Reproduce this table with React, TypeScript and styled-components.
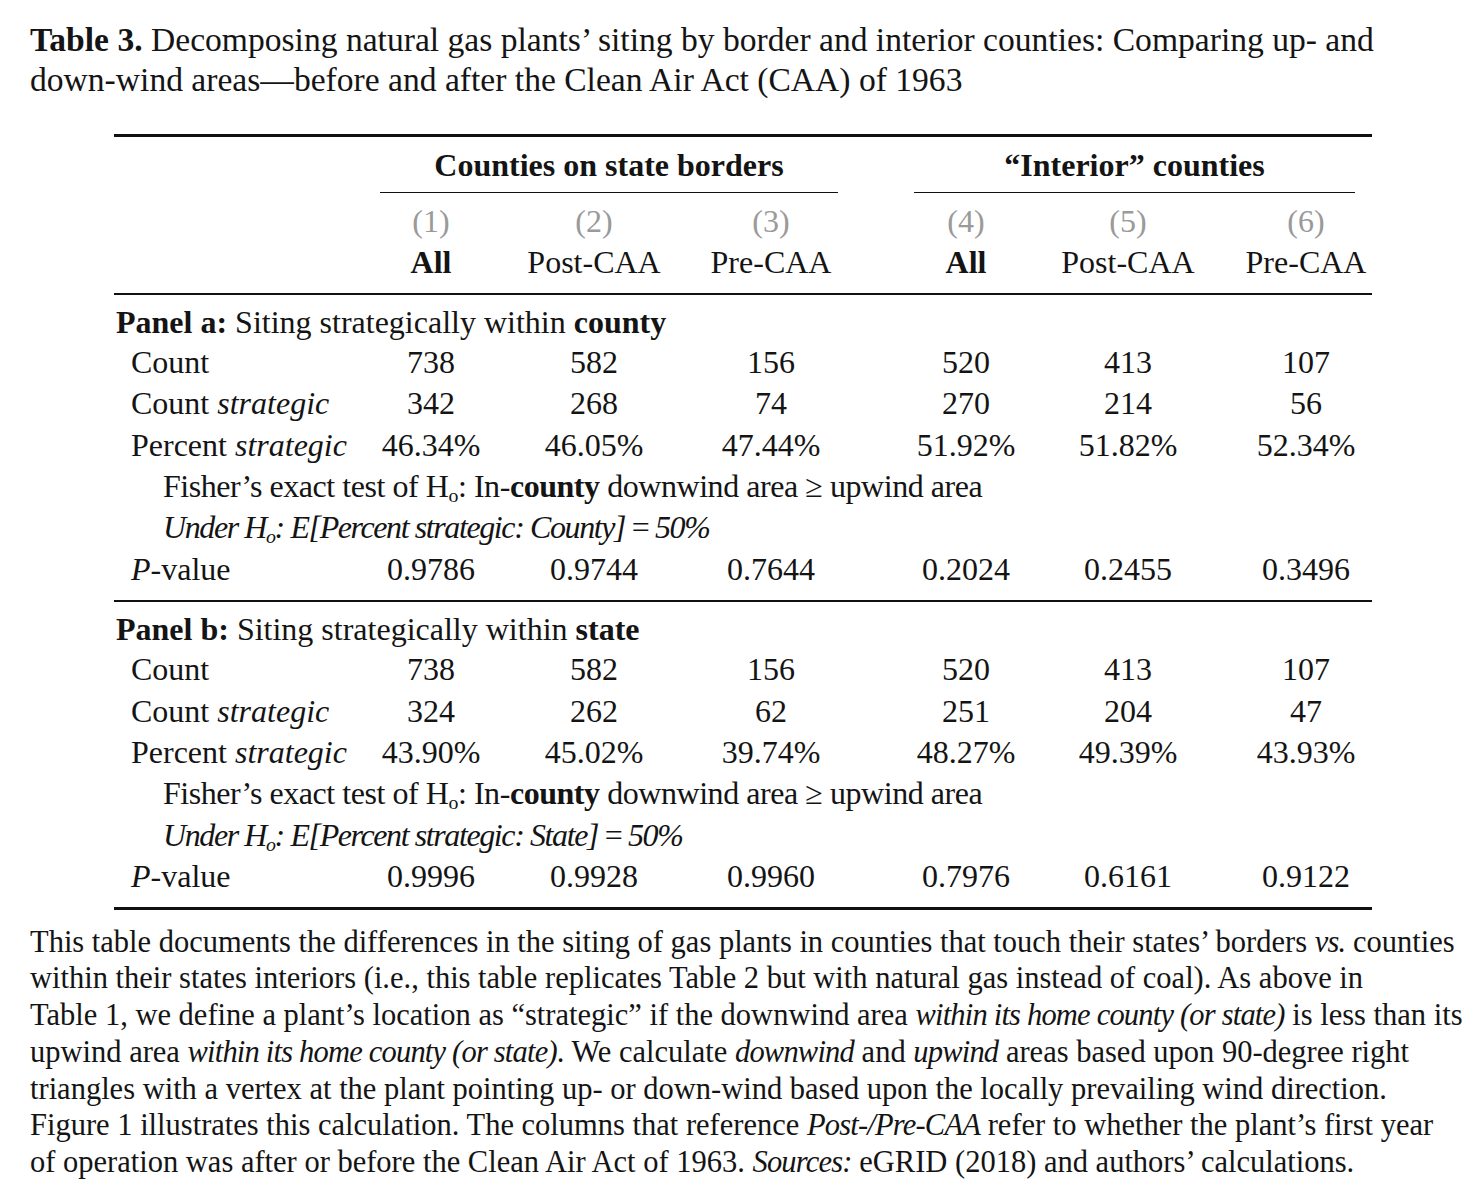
import React from "react";
import styled, { createGlobalStyle } from "styled-components";

const GlobalStyle = createGlobalStyle`
  html, body { margin: 0; padding: 0; background: #ffffff; }
  body {
    font-family: "Liberation Serif", "DejaVu Serif", serif;
    color: #141414;
  }
`;

const Page = styled.div`
  width: 1480px;
  height: 1196px;
  padding: 20px 0 0 30px;
  box-sizing: border-box;
  overflow: hidden;
`;

const Caption = styled.div`
  font-size: 33.6px;
  line-height: 40px;
`;

const Line = styled.span`
  display: block;
  white-space: nowrap;
`;

const Bold = styled.b`
  font-weight: 700;
`;

const Table = styled.div`
  width: 1258px;
  margin: 34px 0 0 84px;
  border-top: 3px solid #111;
  border-bottom: 3px solid #111;
  display: grid;
  grid-template-columns: 186px 262px 64px 290px 100px 224px 132px;
  font-size: 32px;
  line-height: 41.4px;
`;

const GroupHead = styled.div<{ $ml: number; $mr: number }>`
  grid-column: span 3;
  margin: 8px ${(p) => p.$mr}px 8px ${(p) => p.$ml}px;
  border-bottom: 1px solid #111;
  padding-bottom: 7px;
  display: flex;
  justify-content: center;
  white-space: nowrap;
  font-weight: 700;
  line-height: 40px;
`;

const Blank = styled.div``;

const EndSpace = styled.div`
  grid-column: 1 / -1;
  height: 9px;
`;

const Cell = styled.div<{ $muted?: boolean; $bold?: boolean }>`
  display: flex;
  justify-content: center;
  white-space: nowrap;
  color: ${(p) => (p.$muted ? "#9a9a9a" : "inherit")};
  font-weight: ${(p) => (p.$bold ? 700 : 400)};
`;

const Label = styled.div`
  padding-left: 17px;
  white-space: nowrap;
`;

const Divider = styled.div<{ $h: number; $mt: number; $mb: number }>`
  grid-column: 1 / -1;
  height: ${(p) => p.$h}px;
  background: #111;
  margin: ${(p) => p.$mt}px 0 ${(p) => p.$mb}px;
`;

const PanelTitle = styled.div`
  grid-column: 1 / -1;
  padding-left: 2px;
  white-space: nowrap;
  line-height: 40px;
`;

const Note = styled.div<{ $italic?: boolean }>`
  grid-column: 1 / -1;
  padding-left: 49px;
  white-space: nowrap;
  font-style: ${(p) => (p.$italic ? "italic" : "normal")};
  letter-spacing: ${(p) => (p.$italic ? "-1.4px" : "-0.45px")};
`;

const Upright = styled.span`
  font-style: normal;
`;

const Sub = styled.sub`
  font-size: 0.62em;
  line-height: 0;
  vertical-align: -0.25em;
`;

const Notes = styled.div`
  margin-top: 14px;
  font-size: 30.5px;
  line-height: 36.7px;
`;

const Em = styled.i`
  letter-spacing: -0.8px;
`;

type Panel = {
  tag: string;
  scope: string;
  count: string[];
  strategic: string[];
  percent: string[];
  scopeCap: string;
  pvals: string[];
};

const panels: Panel[] = [
  {
    tag: "Panel a:",
    scope: "county",
    count: ["738", "582", "156", "520", "413", "107"],
    strategic: ["342", "268", "74", "270", "214", "56"],
    percent: ["46.34%", "46.05%", "47.44%", "51.92%", "51.82%", "52.34%"],
    scopeCap: "County",
    pvals: ["0.9786", "0.9744", "0.7644", "0.2024", "0.2455", "0.3496"],
  },
  {
    tag: "Panel b:",
    scope: "state",
    count: ["738", "582", "156", "520", "413", "107"],
    strategic: ["324", "262", "62", "251", "204", "47"],
    percent: ["43.90%", "45.02%", "39.74%", "48.27%", "49.39%", "43.93%"],
    scopeCap: "State",
    pvals: ["0.9996", "0.9928", "0.9960", "0.7976", "0.6161", "0.9122"],
  },
];

const DataRow: React.FC<{ label: React.ReactNode; values: string[] }> = ({
  label,
  values,
}) => (
  <>
    <Label>{label}</Label>
    {values.map((v, i) => (
      <Cell key={i}>{v}</Cell>
    ))}
  </>
);

const PanelBlock: React.FC<{ p: Panel }> = ({ p }) => (
  <>
    <PanelTitle>
      <Bold>{p.tag}</Bold> Siting strategically within <Bold>{p.scope}</Bold>
    </PanelTitle>
    <DataRow label="Count" values={p.count} />
    <DataRow
      label={
        <>
          Count <i>strategic</i>
        </>
      }
      values={p.strategic}
    />
    <DataRow
      label={
        <>
          Percent <i>strategic</i>
        </>
      }
      values={p.percent}
    />
    <Note>
      Fisher’s exact test of H<Sub>o</Sub>: In-<Bold>county</Bold> downwind area ≥ upwind area
    </Note>
    <Note $italic>
      Under H<Sub>o</Sub>: E[Percent strategic: {p.scopeCap}] <Upright>=</Upright> 50%
    </Note>
    <DataRow
      label={
        <>
          <i>P</i>-value
        </>
      }
      values={p.pvals}
    />
  </>
);

export default function App() {
  const heads = ["All", "Post-CAA", "Pre-CAA", "All", "Post-CAA", "Pre-CAA"];
  return (
    <Page>
      <GlobalStyle />
      <Caption>
        <Line>
          <Bold>Table 3.</Bold> Decomposing natural gas plants’ siting by border and interior
          counties: Comparing up- and
        </Line>
        <Line>down-wind areas—before and after the Clean Air Act (CAA) of 1963</Line>
      </Caption>

      <Table>
        <Blank />
        <GroupHead $ml={80} $mr={78}>Counties on state borders</GroupHead>
        <GroupHead $ml={-2} $mr={17}>“Interior” counties</GroupHead>

        <Blank />
        {[1, 2, 3, 4, 5, 6].map((n) => (
          <Cell key={n} $muted>
            ({n})
          </Cell>
        ))}
        <Blank />
        {heads.map((h, i) => (
          <Cell key={i} $bold={h === "All"}>
            {h}
          </Cell>
        ))}

        <Divider $h={2} $mt={9} $mb={7} />
        <PanelBlock p={panels[0]} />
        <Divider $h={2} $mt={10} $mb={7} />
        <PanelBlock p={panels[1]} />
        <EndSpace />
      </Table>

      <Notes>
        <Line>
          This table documents the differences in the siting of gas plants in counties that touch
          their states’ borders <Em>vs.</Em> counties
        </Line>
        <Line>
          within their states interiors (i.e., this table replicates Table 2 but with natural gas
          instead of coal). As above in
        </Line>
        <Line>
          Table 1, we define a plant’s location as “strategic” if the downwind area{" "}
          <Em>within its home county (or state)</Em> is less than its
        </Line>
        <Line>
          upwind area <Em>within its home county (or state)</Em>. We calculate <Em>downwind</Em>{" "}
          and <Em>upwind</Em> areas based upon 90-degree right
        </Line>
        <Line>
          triangles with a vertex at the plant pointing up- or down-wind based upon the locally
          prevailing wind direction.
        </Line>
        <Line>
          Figure 1 illustrates this calculation. The columns that reference{" "}
          <Em>Post-/Pre-CAA</Em> refer to whether the plant’s first year
        </Line>
        <Line>
          of operation was after or before the Clean Air Act of 1963. <Em>Sources:</Em> eGRID
          (2018) and authors’ calculations.
        </Line>
      </Notes>
    </Page>
  );
}
